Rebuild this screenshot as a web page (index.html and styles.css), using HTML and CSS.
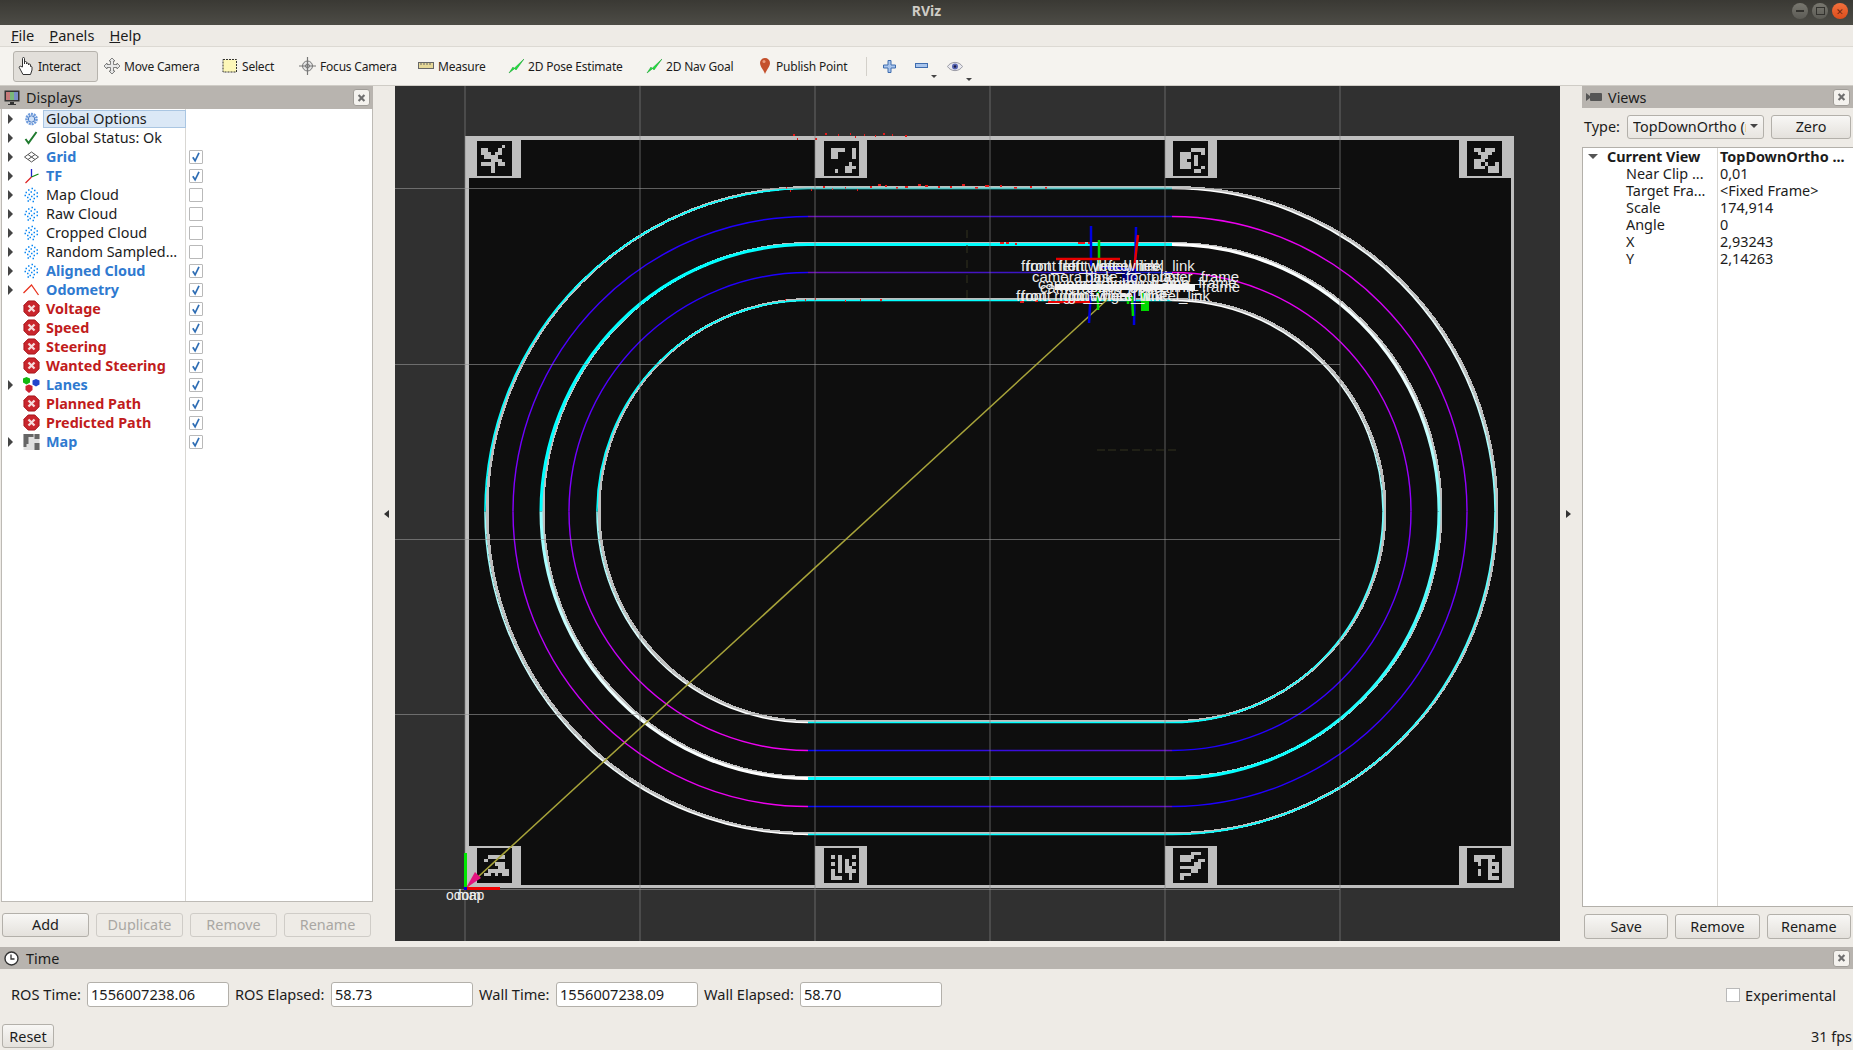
FILE: index.html
```html
<!DOCTYPE html>
<html lang="en">
<head>
  <meta charset="UTF-8">
  <link rel="stylesheet" href="styles.css">
  <title>RViz</title>
</head>
<body>
  <!-- shared icons -->
  <svg class="defs" width="0" height="0">
    <symbol id="i_cloud" viewBox="0 0 16 16">
      <path d="M8 1.5h1.5M4.5 3h1.5M10.500 3.500h1.500M2 5.500h1.500M7 5h1.500M13 6h1.500M5 7.500h1.500M10 7.500h1.500M1 8.500h1.500M7.500 9.500h1.500M13 9.500h1.500M3.500 10.500h1.500M10 11.500h1.500M6 12.500h1.500M4 14h1.500M9 14.500h1.500" stroke="#0a86f2" stroke-width="1.7" fill="none"/>
    </symbol>
    <symbol id="i_err" viewBox="0 0 18 18">
      <path d="M5.500 1h7L17 5.500v7L12.500 17h-7L1 12.500v-7z" fill="#c9252c" stroke="#a5151c"/>
      <path d="M5.800 5.800l6.400 6.400M12.200 5.800l-6.400 6.400" stroke="#f6dcdc" stroke-width="2.400"/>
    </symbol>
    <symbol id="i_check" viewBox="0 0 14 14">
      <path d="M3.800 7.200l2.300 3.600L10 2.800" fill="none" stroke="#2e6db4" stroke-width="1.700"/>
    </symbol>
    <symbol id="i_close" viewBox="0 0 18 18">
      <path d="M5.500 5.500l7 7M12.500 5.500l-7 7" stroke="#6f6f6f" stroke-width="2.600"/>
    </symbol>
  </svg>

  <div class="titlebar">
    <span class="title_text">RViz</span>
    <div class="win_buttons">
      <span class="win_btn"><i class="min_mark"></i></span>
      <span class="win_btn"><i class="max_mark"></i></span>
      <span class="win_btn win_close">&#10005;</span>
    </div>
  </div>

  <div class="menubar">
    <span><u>F</u>ile</span>
    <span><u>P</u>anels</span>
    <span><u>H</u>elp</span>
  </div>

  <div class="toolbar">
    <div class="tool active">
      <svg width="16" height="20" viewBox="0 0 16 20"><path d="M4.500 11V2.500a1 1 0 0 1 2 0V8l0-1.500a1 1 0 0 1 2 0V8a1 1 0 0 1 2 0v1a1 1 0 0 1 2 0v1.500a1 1 0 0 1 1.500 .5v3l-1.500 4.500H5L1.500 12a1 1 0 0 1 1.500-1.500z" fill="#fff" stroke="#333" stroke-width="1"/></svg>
      <span>Interact</span>
    </div>
    <div class="tool">
      <svg width="16" height="18" viewBox="0 0 16 18"><path d="M8 1l3 3H9.500v3.500H13V6l3 3-3 3v-1.500H9.500V14H11l-3 3-3-3h1.500v-3.500H3V12L0 9l3-3v1.500h3.500V4H5z" fill="#e8e8e8" stroke="#666" stroke-width=".8"/></svg>
      <span>Move Camera</span>
    </div>
    <div class="tool">
      <svg width="16" height="16" viewBox="0 0 16 16"><rect x="1" y="1.500" width="13.500" height="12.500" fill="#fdf7b8" stroke="#333" stroke-dasharray="2 1"/></svg>
      <span>Select</span>
    </div>
    <div class="tool">
      <svg width="17" height="18" viewBox="0 0 17 18"><circle cx="8.500" cy="9" r="5" fill="#e4e4e4" stroke="#777"/><circle cx="8.500" cy="9" r="2" fill="none" stroke="#777"/><path d="M8.500 0v18M0 9h17" stroke="#777" stroke-width="1.200"/></svg>
      <span>Focus Camera</span>
    </div>
    <div class="tool">
      <svg width="16" height="10" viewBox="0 0 16 10"><rect x=".5" y="1.500" width="15" height="6" fill="#e6d898" stroke="#666"/><path d="M3 2v2M6 2v2M9 2v2M12 2v2" stroke="#666"/></svg>
      <span>Measure</span>
    </div>
    <div class="tool">
      <svg width="16" height="16" viewBox="0 0 16 16"><path d="M1 15L5 9l1 1.500L16 1l-8 11-1.200-1.500z" fill="#1ee23c" stroke="#139b2a" stroke-width=".5"/></svg>
      <span>2D Pose Estimate</span>
    </div>
    <div class="tool">
      <svg width="16" height="16" viewBox="0 0 16 16"><path d="M1 15L5 9l1 1.500L16 1l-8 11-1.200-1.500z" fill="#1ee23c" stroke="#139b2a" stroke-width=".5"/></svg>
      <span>2D Nav Goal</span>
    </div>
    <div class="tool">
      <svg width="14" height="18" viewBox="0 0 14 18"><path d="M7 17C5 12 2 9.500 2 6a5 5 0 0 1 10 0c0 3.500-3 6-5 11z" fill="#c4502c"/><circle cx="6" cy="4.500" r="1.500" fill="#ea9a7c"/></svg>
      <span>Publish Point</span>
    </div>
    <div class="tool_sep"></div>
    <div class="view_tools">
      <svg width="13" height="13" viewBox="0 0 13 13"><path d="M5 .5h3V5h4.500v3H8v4.500H5V8H.5V5H5z" fill="#a8c4ec" stroke="#3f6cae"/></svg>
      <span class="view_tool">
        <svg width="13" height="6" viewBox="0 0 13 6"><rect x=".5" y=".5" width="12" height="4" fill="#a8c4ec" stroke="#3f6cae"/></svg>
        <i class="caret"></i>
      </span>
      <span class="view_tool">
        <svg width="16" height="11" viewBox="0 0 16 11"><path d="M.5 5.500C4 0 12 0 15.500 5.500 12 11 4 11 .5 5.500z" fill="#e8e8ee" stroke="#9a9aa4"/><circle cx="8" cy="5.500" r="3" fill="#5866b4"/><circle cx="8" cy="5.500" r="1.200" fill="#1c1c40"/></svg>
        <i class="caret"></i>
      </span>
    </div>
  </div>

  <div class="workspace">
    <!-- Displays -->
    <div class="dock dock_left">
      <div class="dock_title">
        <svg width="16" height="16" viewBox="0 0 16 16"><rect x=".5" y=".5" width="15" height="11" fill="#333"/><rect x="2" y="2" width="4" height="8" fill="#c77a7a"/><rect x="6" y="2" width="4" height="8" fill="#7ab87a"/><rect x="10" y="2" width="4" height="8" fill="#7a8ec7"/><path d="M6 12h4v2h2v1H4v-1h2z" fill="#333"/></svg>
        <span class="dock_name">Displays</span>
        <button class="dock_close"><svg width="16" height="16"><use href="#i_close"/></svg></button>
      </div>
      <div class="displays_tree">
        <div class="row">
          <i class="arrow"></i>
          <svg class="row_icon" width="14" height="14" viewBox="0 0 14 14"><circle cx="7" cy="7" r="5" fill="none" stroke="#6e9bdc" stroke-width="2.600" stroke-dasharray="2 .8"/><circle cx="7" cy="7" r="3.200" fill="#cfe0f6" stroke="#4a7bc4"/></svg>
          <span class="name selected">Global Options</span>
        </div>
        <div class="row">
          <i class="arrow"></i>
          <svg class="row_icon" width="16" height="16" viewBox="0 0 16 16"><path d="M2 9l3 4L13 2" fill="none" stroke="#1f7a2e" stroke-width="2"/></svg>
          <span class="name">Global Status: Ok</span>
        </div>
        <div class="row">
          <i class="arrow"></i>
          <svg class="row_icon" width="16" height="12" viewBox="0 0 16 12"><path d="M1 6l7-5 7 5-7 5zM4.500 3.500l7 5M11.500 3.500l-7 5" fill="#fff" stroke="#555"/></svg>
          <span class="name blue">Grid</span>
          <span class="check"><svg width="14" height="14"><use href="#i_check"/></svg></span>
        </div>
        <div class="row">
          <i class="arrow"></i>
          <svg class="row_icon" width="16" height="16" viewBox="0 0 16 16"><path d="M8 9V1" stroke="#2222cc" stroke-width="1.300"/><path d="M8 9l7-3" stroke="#118811" stroke-width="1.300"/><path d="M8 9l-6 6" stroke="#dd2222" stroke-width="1.300"/></svg>
          <span class="name blue">TF</span>
          <span class="check"><svg width="14" height="14"><use href="#i_check"/></svg></span>
        </div>
        <div class="row">
          <i class="arrow"></i>
          <svg class="row_icon" width="16" height="16"><use href="#i_cloud"/></svg>
          <span class="name">Map Cloud</span>
          <span class="check"></span>
        </div>
        <div class="row">
          <i class="arrow"></i>
          <svg class="row_icon" width="16" height="16"><use href="#i_cloud"/></svg>
          <span class="name">Raw Cloud</span>
          <span class="check"></span>
        </div>
        <div class="row">
          <i class="arrow"></i>
          <svg class="row_icon" width="16" height="16"><use href="#i_cloud"/></svg>
          <span class="name">Cropped Cloud</span>
          <span class="check"></span>
        </div>
        <div class="row">
          <i class="arrow"></i>
          <svg class="row_icon" width="16" height="16"><use href="#i_cloud"/></svg>
          <span class="name">Random Sampled&hellip;</span>
          <span class="check"></span>
        </div>
        <div class="row">
          <i class="arrow"></i>
          <svg class="row_icon" width="16" height="16"><use href="#i_cloud"/></svg>
          <span class="name blue">Aligned Cloud</span>
          <span class="check"><svg width="14" height="14"><use href="#i_check"/></svg></span>
        </div>
        <div class="row">
          <i class="arrow"></i>
          <svg class="row_icon" width="16" height="12" viewBox="0 0 16 12"><path d="M0 9l8-8 7 10" fill="none" stroke="#e8321e" stroke-width="1.300"/></svg>
          <span class="name blue">Odometry</span>
          <span class="check"><svg width="14" height="14"><use href="#i_check"/></svg></span>
        </div>
        <div class="row">
          <i class="arrow none"></i>
          <svg class="row_icon" width="17" height="17"><use href="#i_err"/></svg>
          <span class="name red">Voltage</span>
          <span class="check"><svg width="14" height="14"><use href="#i_check"/></svg></span>
        </div>
        <div class="row">
          <i class="arrow none"></i>
          <svg class="row_icon" width="17" height="17"><use href="#i_err"/></svg>
          <span class="name red">Speed</span>
          <span class="check"><svg width="14" height="14"><use href="#i_check"/></svg></span>
        </div>
        <div class="row">
          <i class="arrow none"></i>
          <svg class="row_icon" width="17" height="17"><use href="#i_err"/></svg>
          <span class="name red">Steering</span>
          <span class="check"><svg width="14" height="14"><use href="#i_check"/></svg></span>
        </div>
        <div class="row">
          <i class="arrow none"></i>
          <svg class="row_icon" width="17" height="17"><use href="#i_err"/></svg>
          <span class="name red">Wanted Steering</span>
          <span class="check"><svg width="14" height="14"><use href="#i_check"/></svg></span>
        </div>
        <div class="row">
          <i class="arrow"></i>
          <svg class="row_icon" width="17" height="16" viewBox="0 0 17 16"><path d="M3.500 0l3.500 1.500v4L3.500 7.500 0 5.500v-4z" fill="#12b812"/><path d="M13 2l3.500 1.500v4L13 9.500 9.500 7.500v-4z" fill="#2244cc"/><path d="M6 7.500l3.500 1.500v4L6 16l-3.500-3V9z" fill="#cc2233"/></svg>
          <span class="name blue">Lanes</span>
          <span class="check"><svg width="14" height="14"><use href="#i_check"/></svg></span>
        </div>
        <div class="row">
          <i class="arrow none"></i>
          <svg class="row_icon" width="17" height="17"><use href="#i_err"/></svg>
          <span class="name red">Planned Path</span>
          <span class="check"><svg width="14" height="14"><use href="#i_check"/></svg></span>
        </div>
        <div class="row">
          <i class="arrow none"></i>
          <svg class="row_icon" width="17" height="17"><use href="#i_err"/></svg>
          <span class="name red">Predicted Path</span>
          <span class="check"><svg width="14" height="14"><use href="#i_check"/></svg></span>
        </div>
        <div class="row">
          <i class="arrow"></i>
          <svg class="row_icon" width="16" height="16" viewBox="0 0 16 16"><rect width="16" height="16" fill="#e0e0e0"/><path d="M0 0h5v5H0zM5 0h5v3H5zM11 0h5v5h-5zM0 5h5v5H0zM0 10h3v3H0zM11 9h5v7h-5z" fill="#666"/></svg>
          <span class="name blue">Map</span>
          <span class="check"><svg width="14" height="14"><use href="#i_check"/></svg></span>
        </div>
      </div>
      <div class="button_row">
        <button class="btn">Add</button>
        <button class="btn" disabled>Duplicate</button>
        <button class="btn" disabled>Remove</button>
        <button class="btn" disabled>Rename</button>
      </div>
    </div>

    <div class="splitter split_a"><i class="split_left"></i></div>

    <!-- 3D view -->
    <div class="viewport">
      <svg class="scene" width="1165" height="855" viewBox="395 86 1165 855">
        <defs>
          <linearGradient id="lane_tl" x1="0" y1="1" x2="0" y2="0"><stop offset="0" stop-color="#8a00ff"/><stop offset="1" stop-color="#1c00ff"/></linearGradient>
          <linearGradient id="lane_br" x1="0" y1="0" x2="0" y2="1"><stop offset="0" stop-color="#8a00ff"/><stop offset="1" stop-color="#1c00ff"/></linearGradient>
          <linearGradient id="lane_tr" x1="0" y1="1" x2="0" y2="0"><stop offset="0" stop-color="#8a00ff"/><stop offset="1" stop-color="#f000f0"/></linearGradient>
          <linearGradient id="lane_bl" x1="0" y1="0" x2="0" y2="1"><stop offset="0" stop-color="#8a00ff"/><stop offset="1" stop-color="#f000f0"/></linearGradient>
          <linearGradient id="lane_top" gradientUnits="userSpaceOnUse" x1="808" y1="0" x2="1172" y2="0"><stop offset="0" stop-color="#6a10b8"/><stop offset="1" stop-color="#1818d0"/></linearGradient>
          <linearGradient id="lane_bot" gradientUnits="userSpaceOnUse" x1="808" y1="0" x2="1172" y2="0"><stop offset="0" stop-color="#0808ff"/><stop offset="1" stop-color="#6010c0"/></linearGradient>
          <linearGradient id="edge_tr" x1="0" y1="0" x2="0" y2="1"><stop offset="0" stop-color="#fff"/><stop offset=".6" stop-color="#e8ffff"/><stop offset="1" stop-color="#70ffff"/></linearGradient>
          <linearGradient id="edge_bl" x1="0" y1="0" x2="0" y2="1"><stop offset="0" stop-color="#90ffff"/><stop offset=".7" stop-color="#f0ffff"/><stop offset="1" stop-color="#fff"/></linearGradient>
          <linearGradient id="edge_br" x1="0" y1="0" x2="0" y2="1"><stop offset="0" stop-color="#70ffff"/><stop offset="1" stop-color="#00ffff"/></linearGradient>
        </defs>

        <!-- map image -->
        <rect x="465" y="136" width="1049" height="752" fill="#bebebe"/>
        <rect x="469" y="140" width="1042" height="745" fill="#0e0e0e"/>
        <g fill="#bebebe">
          <rect x="469" y="140" width="52" height="38"/>
          <rect x="815" y="136" width="52" height="42"/>
          <rect x="1165" y="136" width="52" height="42"/>
          <rect x="1459" y="140" width="52" height="38"/>
          <rect x="469" y="846" width="52" height="39"/>
          <rect x="815" y="846" width="52" height="39"/>
          <rect x="1165" y="846" width="52" height="39"/>
          <rect x="1459" y="846" width="52" height="39"/>
        </g>
        <g class="marker" transform="translate(477 141) scale(3.5)"><rect width="10" height="10"/><path d="M7 1.500h1M1 2.500h2M6 2.500h1M1 3.500h3M5 3.500h2M2 4.500h4M4 5.500h3M1 6.500h4M6 6.500h2M4 7.500h1M4 8.500h1"/></g>
        <g class="marker" transform="translate(824 141) scale(3.5)"><rect width="10" height="10"/><path d="M2 2.500h4M8 2.500h1M2 3.500h2M8 3.500h1M2 4.500h2M8 4.500h1M7 6.500h1M6 7.500h3M3 8.500h1M6 8.500h2"/></g>
        <g class="marker" transform="translate(1173 141) scale(3.5)"><rect width="10" height="10"/><path d="M5 2.500h4M2 3.500h3M8 3.500h1M2 4.500h3M6 4.500h1M2 5.500h2M6 5.500h1M2 6.500h3M6 6.500h1M2 7.500h3M8 7.500h1M6 8.500h2"/></g>
        <g class="marker" transform="translate(1467 141) scale(3.5)"><rect width="10" height="10"/><path d="M2 2.500h2M5 2.500h3M3 3.500h4M4 4.500h2M2 5.500h3M2 6.500h2M5 6.500h1M8 6.500h1M2 7.500h3M6 7.500h3M6 8.500h3"/></g>
        <g class="marker" transform="translate(477 848) scale(3.5)"><rect width="10" height="10"/><path d="M3 2.500h5M2 3.500h1M5 4.500h3M6 5.500h2M3 6.500h6M2 7.500h2M5 7.500h1M7 7.500h2"/></g>
        <g class="marker" transform="translate(824 848) scale(3.5)"><rect width="10" height="10"/><path d="M2 2.500h1M4 2.500h1M8 2.500h1M4 3.500h1M6 3.500h1M2 4.500h1M4 4.500h1M6 4.500h1M8 4.500h1M4 5.500h1M6 5.500h2M2 6.500h1M4 6.500h1M6 6.500h3M2 7.500h1M7 7.500h1M2 8.500h3M7 8.500h1"/></g>
        <g class="marker" transform="translate(1173 848) scale(3.5)"><rect width="10" height="10"/><path d="M5 1.500h3M2 2.500h3M5 2.500h1M2 3.500h3M7 3.500h2M6 4.500h2M2 5.500h6M5 6.500h2M2 7.500h3M2 8.500h1"/></g>
        <g class="marker" transform="translate(1467 848) scale(3.5)"><rect width="10" height="10"/><path d="M2 2.500h6M2 3.500h2M6 3.500h1M3 4.500h1M6 4.500h3M6 5.500h1M8 5.500h1M3 6.500h1M6 6.500h3M3 7.500h1M6 7.500h1M6 8.500h3"/></g>

        <!-- scanned walls behind the detected edges -->
        <g class="walls">
          <path transform="translate(2 -1)" d="M808 188.500H1172A323 323 0 0 1 1172 834.500H808A323 323 0 0 1 808 188.500Z"/>
          <path transform="translate(2 -1)" d="M808 244.500H1172A267 267 0 0 1 1172 778.500H808A267 267 0 0 1 808 244.500Z"/>
          <path transform="translate(2 -1)" d="M808 300.500H1172A211 211 0 0 1 1172 722.500H808A211 211 0 0 1 808 300.500Z"/>
        </g>

        <!-- detected edges -->
        <g class="edges">
          <path stroke="#00ffff" d="M485 511.500A323 323 0 0 1 808 188.500H1172"/>
          <path stroke="url(#edge_tr)" d="M1172 188.500A323 323 0 0 1 1495 511.500"/>
          <path stroke="url(#edge_br)" d="M1495 511.500A323 323 0 0 1 1172 834.500"/>
          <path stroke="#00ffff" d="M1172 834.500H808"/>
          <path stroke="url(#edge_bl)" d="M808 834.500A323 323 0 0 1 485 511.500"/>

          <path class="thick" stroke="#00ffff" d="M541 511.500A267 267 0 0 1 808 244.500H1172"/>
          <path class="thick" stroke="url(#edge_tr)" d="M1172 244.500A267 267 0 0 1 1439 511.500"/>
          <path class="thick" stroke="url(#edge_br)" d="M1439 511.500A267 267 0 0 1 1172 778.500"/>
          <path class="thick" stroke="#00ffff" d="M1172 778.500H808"/>
          <path class="thick" stroke="url(#edge_bl)" d="M808 778.500A267 267 0 0 1 541 511.500"/>

          <path stroke="#00ffff" d="M597 511.500A211 211 0 0 1 808 300.500H1172"/>
          <path stroke="url(#edge_tr)" d="M1172 300.500A211 211 0 0 1 1383 511.500"/>
          <path stroke="url(#edge_br)" d="M1383 511.500A211 211 0 0 1 1172 722.500"/>
          <path stroke="#00ffff" d="M1172 722.500H808"/>
          <path stroke="url(#edge_bl)" d="M808 722.500A211 211 0 0 1 597 511.500"/>
        </g>

        <!-- lanes -->
        <g class="lanes">
          <path stroke="url(#lane_tl)" d="M513 511.500A295 295 0 0 1 808 216.500"/>
          <path stroke="url(#lane_top)" d="M808 216.500H1172"/>
          <path stroke="url(#lane_tr)" d="M1467 511.500A295 295 0 0 0 1172 216.500"/>
          <path stroke="url(#lane_br)" d="M1467 511.500A295 295 0 0 1 1172 806.500"/>
          <path stroke="url(#lane_bot)" d="M808 806.500H1172"/>
          <path stroke="url(#lane_bl)" d="M513 511.500A295 295 0 0 0 808 806.500"/>

          <path stroke="url(#lane_tl)" d="M569 511.500A239 239 0 0 1 808 272.500"/>
          <path stroke="url(#lane_top)" d="M808 272.500H1172"/>
          <path stroke="url(#lane_tr)" d="M1411 511.500A239 239 0 0 0 1172 272.500"/>
          <path stroke="url(#lane_br)" d="M1411 511.500A239 239 0 0 1 1172 750.500"/>
          <path stroke="url(#lane_bot)" d="M808 750.500H1172"/>
          <path stroke="url(#lane_bl)" d="M569 511.500A239 239 0 0 0 808 750.500"/>
        </g>

        <!-- laser speckle -->
        <path class="speckle" d="M793 135h2M797 139h1M815 139h2M825 134h2M838 135h1M850 134h1M855 137h1M864 135h1M875 136h1M883 134h2M892 135h1M905 136h2M786 188h1M790 191h1M811 190h1M823 187h2M832 189h1M845 188h1M857 190h1M870 187h2M878 185h3M885 186h2M896 188h2M905 187h3M918 185h3M925 186h3M938 187h2M950 187h2M962 185h3M975 188h3M985 186h4M1000 186h2M1014 188h3M1030 187h2M1045 188h2M1000 243h4M1006 243h3M1015 244h2M1078 243h7M1088 243h3M785 300h1M805 300h1M815 299h1M845 301h1M860 300h1M880 300h2M1020 302h4M1035 301h3M1080 302h8"/>
        <path class="faint" d="M1097 450h8M1108 450h8M1120 450h8M1132 450h8M1144 450h8M1156 450h8M1168 450h8M967 230v8M967 245v8M967 260v8M967 275v8M967 290v8"/>

        <!-- grid -->
        <g class="grid_v">
          <path d="M465 86V941M640 86V941M815 86V941M990 86V941M1165 86V941M1340 86V941"/>
        </g>
        <g class="grid_h">
          <path d="M395 188.500H1340M395 364.500H1340M395 539.500H1340M395 714.500H1340M395 889.500H1340"/>
        </g>

        <!-- tf frames -->
        <path d="M466 888L1110 297" stroke="#a8a43a" stroke-width="1.500"/>
        <rect x="464" y="853" width="3" height="35" fill="#00e600"/>
        <rect x="465" y="887" width="35" height="3" fill="#f00000"/>
        <path d="M466 888l9-16 6 6z" fill="#e4137f"/>
        <rect x="464" y="887" width="3" height="3" fill="#0000e0"/>
        <g class="tf_text">
          <text x="446" y="900">odom</text>
          <text x="457" y="900">map</text>
        </g>

        <g class="tf_axes">
          <path stroke="#0000e0" d="M1091 226V266"/>
          <path stroke="#0000e0" d="M1136 227L1134 325"/>
          <path stroke="#0000e0" d="M1092 272L1089 323"/>
          <path stroke="#e80000" d="M1138 235L1134 270"/>
          <path stroke="#00d800" d="M1099 240V266"/>
          <path stroke="#e80000" d="M1056 259H1120"/>
          <path stroke="#0000e0" d="M1101 267L1136 270"/>
          <path stroke="#00d800" d="M1098 292V310"/>
          <path stroke="#00d800" d="M1132 296L1133 316"/>
          <path stroke="#00d800" d="M1128 294V304"/>
          <path stroke="#e80000" d="M1048 302H1090"/>
        </g>
        <rect x="1122" y="270" width="13" height="12" fill="#00007a"/>
        <rect x="1141" y="293" width="8" height="18" fill="#00d800"/>
        <g class="tf_text large">
          <text x="1021" y="271">front_left_wheel_link</text>
          <text x="1026" y="271">front_left_wheel_link</text>
          <text x="1058" y="271">front_left_wheel_link</text>
          <text x="1032" y="282">camera_link</text>
          <text x="1085" y="282">base_footprint</text>
          <text x="1160" y="282">laser_frame</text>
          <text x="1038" y="289">camera_frame</text>
          <text x="1066" y="289">base_link imu_link</text>
          <text x="1119" y="288">imu_frame_frame</text>
          <text x="1040" y="293">camera_link_optical</text>
          <text x="1090" y="292">base_scan_link_frame</text>
          <text x="1016" y="301">front_right_wheel_link</text>
          <text x="1021" y="301">front_right_wheel_link</text>
          <text x="1064" y="301">front_right_wheel_link</text>
        </g>
        <rect x="1055" y="284" width="140" height="6" fill="#f4f4f4"/>
      </svg>
    </div>

    <div class="splitter split_b"><i class="split_right"></i></div>

    <!-- Views -->
    <div class="dock dock_right">
      <div class="dock_title views_title">
        <svg width="16" height="10" viewBox="0 0 16 10"><path d="M0 1l4 3V2a1 1 0 0 1 1-1h10a1 1 0 0 1 1 1v6a1 1 0 0 1-1 1H5a1 1 0 0 1-1-1V6L0 9z" fill="#555"/></svg>
        <span class="dock_name">Views</span>
        <button class="dock_close"><svg width="16" height="16"><use href="#i_close"/></svg></button>
      </div>
      <div class="type_row">
        <span class="type_label">Type:</span>
        <div class="combo"><span class="combo_text">TopDownOrtho (rviz)</span><i class="combo_caret"></i></div>
        <button class="btn zero">Zero</button>
      </div>
      <div class="views_tree">
        <div class="vrow"><span class="vname top"><i class="arrow_down"></i><b>Current View</b></span><b class="vvalue">TopDownOrtho ...</b></div>
        <div class="vrow"><span class="vname">Near Clip ...</span><span class="vvalue">0,01</span></div>
        <div class="vrow"><span class="vname">Target Fra...</span><span class="vvalue">&lt;Fixed Frame&gt;</span></div>
        <div class="vrow"><span class="vname">Scale</span><span class="vvalue">174,914</span></div>
        <div class="vrow"><span class="vname">Angle</span><span class="vvalue">0</span></div>
        <div class="vrow"><span class="vname">X</span><span class="vvalue">2,93243</span></div>
        <div class="vrow"><span class="vname">Y</span><span class="vvalue">2,14263</span></div>
      </div>
      <div class="button_row views_buttons">
        <button class="btn">Save</button>
        <button class="btn">Remove</button>
        <button class="btn">Rename</button>
      </div>
    </div>
  </div>

  <!-- Time -->
  <div class="time_dock">
    <div class="dock_title time_title">
      <svg width="15" height="17" viewBox="0 0 15 17"><circle cx="7.500" cy="8.500" r="6.500" fill="#fff" stroke="#333" stroke-width="1.400"/><path d="M7 4.500V9h3.500" fill="none" stroke="#333" stroke-width="1.300"/></svg>
      <span class="dock_name">Time</span>
      <button class="dock_close"><svg width="16" height="16"><use href="#i_close"/></svg></button>
    </div>
    <div class="time_row">
      <label class="time_label first">ROS Time:</label>
      <span class="time_input">1556007238.06</span>
      <label class="time_label">ROS Elapsed:</label>
      <span class="time_input">58.73</span>
      <label class="time_label short">Wall Time:</label>
      <span class="time_input">1556007238.09</span>
      <label class="time_label">Wall Elapsed:</label>
      <span class="time_input">58.70</span>
      <span class="experimental"><i class="plain_check"></i>Experimental</span>
    </div>
    <div class="reset_row">
      <button class="btn reset">Reset</button>
      <span class="fps">31 fps</span>
    </div>
  </div>
</body>
</html>
```

FILE: styles.css
```css
/* Basics */
* {
  box-sizing: border-box;
}

html, body {
  margin: 0;
  height: 100%;
}

body {
  display: flex;
  flex-direction: column;
  width: 1853px;
  height: 1050px;
  overflow: hidden;
  font-family: "Noto Sans", sans-serif;
  font-size: 14.4px;
  color: #1c1c1c;
  background-color: #eeebe6;
}

.defs {
  display: block;
  height: 0;
}

/* Title bar */
.titlebar {
  display: flex;
  justify-content: center;
  align-items: center;
  position: relative;
  height: 25px;
  padding-bottom: 4px;
  background: linear-gradient(#3a3934, #4d4c46);
}

.title_text {
  font-size: 14px;
  font-weight: 700;
  color: #cfccc5;
}

.win_buttons {
  display: flex;
  gap: 4px;
  position: absolute;
  right: 5px;
  top: 3px;
}

.win_btn {
  display: flex;
  justify-content: center;
  align-items: center;
  width: 16px;
  height: 16px;
  border-radius: 50%;
  background: linear-gradient(#78776f, #5c5b55);
}

.min_mark {
  width: 8px;
  height: 2px;
  background-color: #33322e;
}

.max_mark {
  width: 9px;
  height: 8px;
  border: 1px solid #33322e;
}

.win_close {
  font-size: 9px;
  color: #6e2510;
  background: linear-gradient(#f2703c, #dd4d1c);
}

/* Menu */
.menubar {
  display: flex;
  align-items: center;
  gap: 15px;
  height: 21px;
  padding: 0 0 2px 11px;
  font-size: 14.6px;
  background-color: #eeebe6;
}

/* Toolbar */
.toolbar {
  display: grid;
  grid-template-columns: 87px 118px 77px 119px 90px 138px 112px 112px 3px auto;
  align-items: center;
  height: 40px;
  padding-left: 13px;
  font-size: 12px;
  letter-spacing: -0.2px;
  background-color: #f5f3ef;
  border-top: 1px solid #dcd9d3;
  border-bottom: 1px solid #cfccc6;
}

.tool {
  display: flex;
  align-items: center;
  gap: 4px;
  height: 31px;
  padding-left: 4px;
}

.tool svg {
  flex: 0 0 auto;
}

.tool.active {
  width: 85px;
  background-color: #e2dfda;
  border: 1px solid #b6b3ad;
  border-radius: 3px;
}

.tool_sep {
  width: 1px;
  height: 19px;
  background-color: #d3d0ca;
}

.view_tools {
  display: flex;
  align-items: center;
  gap: 19px;
  padding-left: 14px;
}

.view_tool {
  display: flex;
  align-items: center;
  position: relative;
}

.caret {
  position: absolute;
  left: 100%;
  bottom: -9px;
  margin-left: 3px;
  border-left: 3px solid transparent;
  border-right: 3px solid transparent;
  border-top: 3px solid #444;
}

/* Main area */
.workspace {
  display: flex;
  height: 861px;
  padding-bottom: 6px;
}

.dock {
  display: flex;
  flex-direction: column;
}

.dock_left {
  width: 373px;
}

.dock_right {
  width: 271px;
}

.dock_title {
  display: flex;
  align-items: center;
  gap: 6px;
  height: 23px;
  padding: 0 3px 0 4px;
  background-color: #b8b4af;
}

.views_title {
  height: 22px;
}

.dock_name {
  flex: 1;
}

.dock_close {
  display: flex;
  justify-content: center;
  align-items: center;
  width: 17px;
  height: 17px;
  padding: 0;
  background-color: #f4f2ee;
  border: 1px solid #a09d98;
  border-radius: 3px;
}

/* Displays tree */
.displays_tree {
  flex: 1;
  margin-left: 1px;
  background: linear-gradient(#d9d7d3, #d9d7d3) 183px 0 / 1px 100% no-repeat #ffffff;
  border: 1px solid #bdbab5;
  border-width: 0 1px 1px 1px;
}

.row {
  display: flex;
  align-items: center;
  height: 19px;
  padding-left: 6px;
}

.arrow {
  flex: 0 0 5px;
  height: 0;
  margin-right: 10px;
  border-left: 5px solid #444;
  border-top: 5px solid transparent;
  border-bottom: 5px solid transparent;
}

.arrow.none {
  border-color: transparent;
}

.row_icon {
  flex: 0 0 17px;
}

.name {
  display: flex;
  align-items: center;
  flex: 0 0 143px;
  height: 19px;
  margin-left: 3px;
  padding-left: 3px;
  overflow: hidden;
  white-space: nowrap;
}

.name.selected {
  height: 18px;
  background-color: #dbe8f6;
  border: 1px solid #aac6e2;
  padding-left: 2px;
}

.blue {
  font-weight: 700;
  color: #2f7ad0;
}

.red {
  font-weight: 700;
  color: #c11c1c;
}

.check {
  display: flex;
  flex: 0 0 14px;
  width: 14px;
  height: 14px;
  margin-left: 3px;
  background-color: #ffffff;
  border: 1px solid #b9b9b9;
  border-radius: 1px;
}

.check svg {
  flex: 0 0 14px;
  margin: -1px;
}

.button_row {
  display: flex;
  gap: 7px;
  height: 24px;
  margin: 11px 2px 4px;
}

.btn {
  flex: 1;
  height: 100%;
  padding: 0;
  font-family: inherit;
  font-size: 14.4px;
  color: #1c1c1c;
  background: linear-gradient(#f8f7f5, #e4e1dc);
  border: 1px solid #b3b0aa;
  border-radius: 3px;
}

.dock_left .btn {
  padding-bottom: 2px;
}

.btn:disabled {
  color: #a9a7a3;
  background: #eeebe6;
  border-color: #cfccc7;
}

/* Splitters */
.splitter {
  display: flex;
  justify-content: center;
  align-items: center;
  flex: 0 0 22px;
}

.split_a {
  padding-left: 5px;
}

.split_b {
  padding-right: 6px;
}

.split_left, .split_right {
  width: 0;
  height: 0;
  border-top: 4px solid transparent;
  border-bottom: 4px solid transparent;
}

.split_left {
  border-right: 5px solid #333;
}

.split_right {
  border-left: 5px solid #333;
}

/* 3D view */
.viewport {
  flex: 0 0 1165px;
  height: 855px;
  background-color: #303030;
}

.scene {
  display: block;
}

.marker rect {
  fill: #0e0e0e;
}

.marker path {
  fill: none;
  stroke: #bebebe;
  stroke-width: 1;
  shape-rendering: crispEdges;
}

.walls path {
  fill: none;
  stroke: #bebebe;
  stroke-width: 3;
  shape-rendering: crispEdges;
}

.edges path {
  fill: none;
  stroke-width: 1.6;
}

.edges path.thick {
  stroke-width: 3;
}

.lanes path {
  fill: none;
  stroke-width: 1.4;
}

.speckle {
  fill: none;
  stroke: #e81818;
  stroke-width: 2;
}

.faint {
  fill: none;
  stroke: #33331f;
  stroke-width: 1;
}

.grid_v path {
  fill: none;
  stroke: rgba(130, 130, 130, 0.45);
  stroke-width: 1.5;
}

.grid_h path {
  fill: none;
  stroke: rgba(150, 150, 150, 0.6);
  stroke-width: 1;
}

.tf_text {
  font-family: "Liberation Sans", sans-serif;
  font-size: 14px;
  fill: #ececec;
}

.tf_text.large {
  font-size: 15px;
}

.tf_axes path {
  fill: none;
  stroke-width: 2.5;
}

/* Views panel */
.type_row {
  display: flex;
  align-items: center;
  height: 24px;
  margin-top: 7px;
  padding-left: 2px;
}

.type_label {
  width: 43px;
  padding-bottom: 2px;
}

.combo {
  display: flex;
  align-items: center;
  width: 137px;
  height: 24px;
  padding: 0 5px 2px 5px;
  overflow: hidden;
  background: linear-gradient(#f8f7f5, #e8e5e0);
  border: 1px solid #b3b0aa;
  border-radius: 3px;
}

.combo_text {
  flex: 1;
  overflow: hidden;
  white-space: nowrap;
}

.combo_caret {
  flex: 0 0 8px;
  margin-left: 4px;
  border-left: 4px solid transparent;
  border-right: 4px solid transparent;
  border-top: 4px solid #444;
}

.btn.zero {
  flex: 0 0 80px;
  margin-left: 7px;
  padding-bottom: 2px;
}

.views_tree {
  flex: 1;
  margin-top: 8px;
  background: linear-gradient(#d9d7d3, #d9d7d3) 134px 0 / 1px 100% no-repeat #ffffff;
  border: 1px solid #b3b0aa;
  border-right: none;
}

.vrow {
  display: flex;
  align-items: center;
  height: 17px;
}

.vname {
  flex: 0 0 137px;
  padding-left: 43px;
  white-space: nowrap;
}

.vname.top {
  display: flex;
  align-items: center;
  padding-left: 5px;
}

.arrow_down {
  margin-right: 9px;
  border-left: 5px solid transparent;
  border-right: 5px solid transparent;
  border-top: 5px solid #555;
}

.vvalue {
  white-space: nowrap;
}

.views_buttons {
  height: 25px;
  margin: 7px 2px 2px;
}

/* Time panel */
.time_dock {
  display: flex;
  flex-direction: column;
  height: 103px;
}

.time_title {
  height: 22px;
  gap: 7px;
  padding-left: 4px;
}

.time_row {
  display: flex;
  align-items: center;
  height: 25px;
  margin-top: 13px;
  padding-right: 17px;
  font-size: 14.6px;
}

.time_label {
  width: 96px;
  margin-left: 6px;
  padding-bottom: 2px;
  white-space: nowrap;
}

.time_label.first {
  width: 76px;
  margin-left: 11px;
}

.time_label.short {
  width: 77px;
}

.time_input {
  display: flex;
  align-items: center;
  width: 142px;
  height: 25px;
  padding: 0 0 2px 3px;
  background-color: #ffffff;
  border: 1px solid #b3b0aa;
  border-radius: 3px;
}

.experimental {
  display: flex;
  align-items: center;
  gap: 5px;
  margin-left: auto;
}

.plain_check {
  width: 14px;
  height: 14px;
  background-color: #ffffff;
  border: 1px solid #b9b9b9;
}

.reset_row {
  display: flex;
  justify-content: space-between;
  align-items: center;
  height: 24px;
  margin-top: 17px;
  padding: 0 1px 0 2px;
}

.btn.reset {
  flex: 0 0 52px;
}
```
